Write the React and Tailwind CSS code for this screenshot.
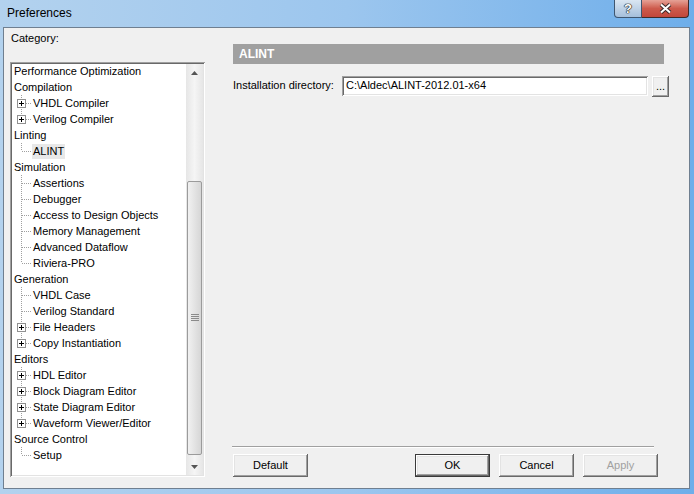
import React from "react";

const tree = [
  { t: "Performance Optimization" },
  { t: "Compilation" },
  { t: "VHDL Compiler", l: 1, plus: true },
  { t: "Verilog Compiler", l: 1, plus: true, last: true },
  { t: "Linting" },
  { t: "ALINT", l: 1, last: true, sel: true },
  { t: "Simulation" },
  { t: "Assertions", l: 1 },
  { t: "Debugger", l: 1 },
  { t: "Access to Design Objects", l: 1 },
  { t: "Memory Management", l: 1 },
  { t: "Advanced Dataflow", l: 1 },
  { t: "Riviera-PRO", l: 1, last: true },
  { t: "Generation" },
  { t: "VHDL Case", l: 1 },
  { t: "Verilog Standard", l: 1 },
  { t: "File Headers", l: 1, plus: true },
  { t: "Copy Instantiation", l: 1, plus: true, last: true },
  { t: "Editors" },
  { t: "HDL Editor", l: 1, plus: true },
  { t: "Block Diagram Editor", l: 1, plus: true },
  { t: "State Diagram Editor", l: 1, plus: true },
  { t: "Waveform Viewer/Editor", l: 1, plus: true, last: true },
  { t: "Source Control" },
  { t: "Setup", l: 1, last: true },
];

const raised =
  "shadow-[inset_-1px_-1px_0_#696969,inset_1px_1px_0_#ffffff,inset_-2px_-2px_0_#a0a0a0,inset_2px_2px_0_#e3e3e3]";
const sunken =
  "shadow-[inset_1px_1px_0_#a0a0a0,inset_-1px_-1px_0_#ffffff,inset_2px_2px_0_#696969,inset_-2px_-2px_0_#e3e3e3]";

function Connector({ plus, last }) {
  return (
    <svg width="20" height="16" className="shrink-0">
      <line x1="9.5" y1="0" x2="9.5" y2={last ? 8 : 16} stroke="#a0a0a0" strokeDasharray="1 1" />
      <line x1="10" y1="8.5" x2="20" y2="8.5" stroke="#a0a0a0" strokeDasharray="1 1" />
      {plus ? (
        <g>
          <rect x="5.5" y="4.5" width="8" height="8" fill="#fff" stroke="#919191" />
          <line x1="7" y1="8.5" x2="12" y2="8.5" stroke="#000" />
          <line x1="9.5" y1="6" x2="9.5" y2="11" stroke="#000" />
        </g>
      ) : null}
    </svg>
  );
}

function TreeRow({ item }) {
  if (!item.l) {
    return <div className="h-[16px] flex items-center pl-[2px] whitespace-nowrap">{item.t}</div>;
  }
  return (
    <div className="h-[16px] flex items-center whitespace-nowrap">
      <Connector plus={item.plus} last={item.last} />
      <span className={item.sel ? "bg-[#e8e8e8] px-[1px] leading-[15px]" : "px-[1px]"}>{item.t}</span>
    </div>
  );
}

function ScrollBar() {
  return (
    <div className="w-[17px] flex flex-col bg-gradient-to-r from-[#e6e6e6] via-[#f5f5f5] to-[#e6e6e6]">
      <div className="h-[17px] flex items-center justify-center">
        <svg width="7" height="4"><path d="M0 4 L3.5 0 L7 4 Z" fill="#555" /></svg>
      </div>
      <div className="h-[100px]" />
      <div className="h-[274px] mx-[1px] rounded-[2px] border border-[#9b9b9b] bg-gradient-to-r from-[#f1f1f1] to-[#d6d6d6] flex items-center justify-center">
        <svg width="8" height="8">
          <line x1="0" y1="0.5" x2="8" y2="0.5" stroke="#8a8a8a" />
          <line x1="0" y1="2.5" x2="8" y2="2.5" stroke="#8a8a8a" />
          <line x1="0" y1="4.5" x2="8" y2="4.5" stroke="#8a8a8a" />
          <line x1="0" y1="6.5" x2="8" y2="6.5" stroke="#8a8a8a" />
        </svg>
      </div>
      <div className="h-[3px]" />
      <div className="h-[17px] flex items-center justify-center">
        <svg width="7" height="4"><path d="M0 0 L3.5 4 L7 0 Z" fill="#555" /></svg>
      </div>
    </div>
  );
}

function Button({ children, isDefault, disabled }) {
  return (
    <div
      className={
        "w-[75px] h-[23px] flex items-center justify-center bg-[#f0f0f0] " +
        (isDefault ? "border border-[#3a3a3a] " : "") +
        raised +
        (disabled ? " text-[#a0a0a0]" : " text-black")
      }
    >
      {children}
    </div>
  );
}

export default function App() {
  return (
    <div className="w-[694px] h-[494px] flex flex-col bg-gradient-to-r from-[#b3d2ee] via-[#9cc6ee] to-[#6eaeea] font-['Liberation_Sans',Arial,sans-serif] text-[11px] text-black overflow-hidden">
      {/* title bar */}
      <div className="h-[27px] flex items-start shrink-0">
        <div className="pl-[7px] pt-[4px] text-[12px] text-black">Preferences</div>
        <div className="ml-auto mr-[5px] flex">
          <div className="w-[28px] h-[18px] border border-t-0 border-[#3f5670] rounded-bl-[4px] bg-gradient-to-b from-[#dae6f2] to-[#a5bfdb] flex items-center justify-center">
            <span className="text-white font-bold text-[13px] leading-none [text-shadow:0_0_1px_#222,0_0_1px_#222,0_0_1px_#222,0_0_1px_#222]">?</span>
          </div>
          <div className="w-[47px] h-[18px] border border-l-0 border-t-0 border-[#3f2a2a] rounded-br-[4px] bg-gradient-to-b from-[#e5a196] via-[#cd5a4c] to-[#c2473b] flex items-center justify-center">
            <svg width="13" height="11">
              <path d="M2 1.5 L11 9.5 M11 1.5 L2 9.5" stroke="#3a2a2a" strokeWidth="4" />
              <path d="M2 1.5 L11 9.5 M11 1.5 L2 9.5" stroke="#fff" strokeWidth="2" />
            </svg>
          </div>
        </div>
      </div>

      {/* client area */}
      <div className="ml-[3px] mr-[4px] mb-[5px] flex-1 border border-[#6f7f90] bg-[#f0f0f0] flex pb-[11px]">
        {/* left column */}
        <div className="ml-[6px] w-[195px] flex flex-col">
          <div className="pt-[4px] pl-[1px] h-[17px] leading-[13px]">Category:</div>
          <div className={"mt-[17px] flex-1 bg-white p-[2px] flex " + sunken}>
            <div className="flex-1 overflow-hidden -mt-[1px]">
              {tree.map((item, i) => (
                <TreeRow key={i} item={item} />
              ))}
            </div>
            <ScrollBar />
          </div>
        </div>

        {/* right column */}
        <div className="ml-[28px] w-[436px] flex flex-col">
          <div className="mt-[16px] w-[431px] h-[20px] bg-[#a0a0a0] flex items-center pl-[6px] text-white font-bold text-[12px]">
            ALINT
          </div>
          <div className="mt-[11px] flex items-center h-[21px]">
            <div className="w-[109px]">Installation directory:</div>
            <div className={"w-[306px] h-[20px] bg-white flex items-center pl-[4px] " + sunken}>
              {"C:\\Aldec\\ALINT-2012.01-x64"}
            </div>
            <div className={"ml-[4px] w-[17px] h-[21px] mt-[1px] bg-[#f0f0f0] flex items-center justify-center " + raised}>
              ...
            </div>
          </div>
          <div className="flex-1" />
          <div className="-ml-[1px] w-[422px] border-t border-[#a0a0a0] border-b border-b-white" />
          <div className="mt-[6px] flex">
            <Button>Default</Button>
            <div className="ml-auto mr-[11px] flex gap-[9px]">
              <Button isDefault>OK</Button>
              <Button>Cancel</Button>
              <Button disabled>Apply</Button>
            </div>
          </div>
        </div>
      </div>
    </div>
  );
}
